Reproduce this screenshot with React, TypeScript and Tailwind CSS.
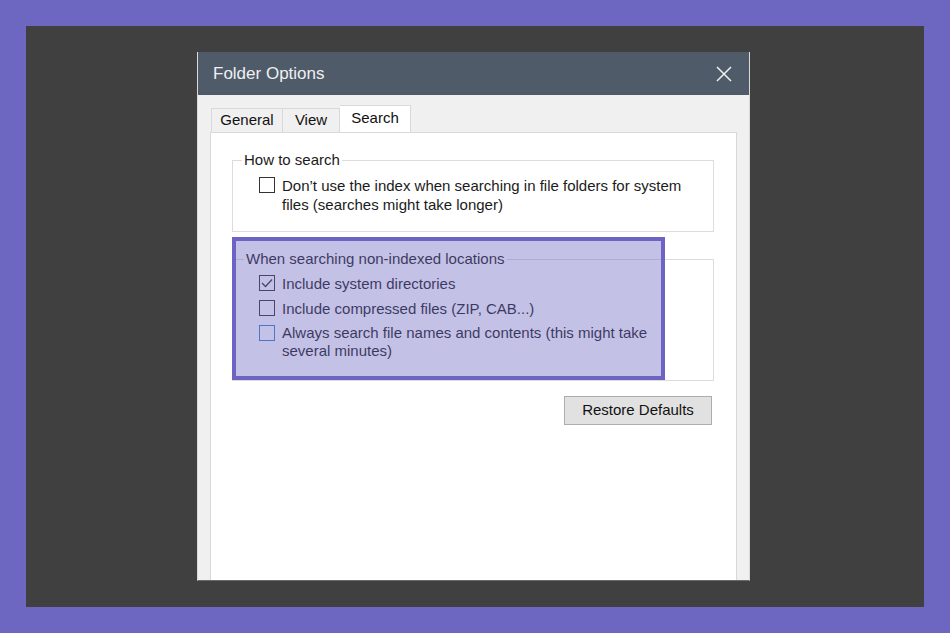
import React from 'react';

const font = { fontFamily: '"Liberation Sans", Arial, sans-serif' };

function Box({ checked, tone = 'dark' }: { checked?: boolean; tone?: 'dark' | 'blue' }) {
  return (
    <span
      className={`mt-[1px] flex h-[16px] w-[16px] shrink-0 items-center justify-center border bg-transparent ${
        tone === 'blue' ? 'border-[#3d7fd1]' : 'border-[#333333]'
      }`}
    >
      {checked && (
        <svg width="12" height="10" viewBox="0 0 12 10" fill="none">
          <path d="M1 5 L4.5 8.5 L11 1.5" stroke="#333" strokeWidth="1.3" />
        </svg>
      )}
    </span>
  );
}

function Check({ label, checked, tone }: { label: React.ReactNode; checked?: boolean; tone?: 'dark' | 'blue' }) {
  return (
    <div className="flex items-start gap-[7px] leading-[19px]">
      <Box checked={checked} tone={tone} />
      <span>{label}</span>
    </div>
  );
}

export default function App() {
  return (
    <div className="h-[633px] w-[950px] bg-[#6e67c2] p-[26px]" style={font}>
      <div className="h-[581px] w-[898px] bg-[#404040] pl-[171px] pt-[26px]">
        {/* Dialog */}
        <div className="flex h-[529px] w-[553px] flex-col border-x border-b border-x-[#dadada] border-b-[#6a6a6a] bg-[#f0f0f0]">
          <div className="flex h-[43px] shrink-0 items-center justify-between bg-[#4f5b69] pl-[15px] pr-[17px]">
            <span className="text-[17px] text-[#eef0f2]">Folder Options</span>
            <svg width="16" height="16" viewBox="0 0 16 16">
              <path d="M1 1 L15 15 M15 1 L1 15" stroke="#eef0f2" strokeWidth="1.5" />
            </svg>
          </div>

          <div className="flex flex-1 flex-col px-[12px] pt-[9px]">
            {/* Tabs */}
            <div className="flex items-end pl-[1px] text-[15px] text-[#111]">
              <div className="flex h-[24px] w-[72px] items-center justify-center border border-b-0 border-[#d9d9d9] bg-[#f0f0f0]">General</div>
              <div className="flex h-[24px] w-[57px] items-center justify-center border border-b-0 border-l-0 border-[#d9d9d9] bg-[#f0f0f0]">View</div>
              <div className="relative top-[1px] flex h-[28px] w-[71px] items-center justify-center border border-b-0 border-l-0 border-[#d9d9d9] bg-white pb-[3px]">Search</div>
            </div>

            {/* Panel */}
            <div className="relative flex-1 border border-b-0 border-[#d9d9d9] bg-white pl-[21px] pr-[22px] pt-[17px] text-[15px] text-[#1b1b1b]">
              <fieldset className="h-[82px] border border-[#dcdcdc] px-[26px]">
                <legend className="ml-[-17px] px-[2px] leading-[20px]">How to search</legend>
                <div className="pt-[6px]">
                  <Check label={<>Don’t use the index when searching in file folders for system<br />files (searches might take longer)</>} />
                </div>
              </fieldset>

              <fieldset className="mt-[17px] h-[132px] border border-[#dcdcdc] px-[26px]">
                <legend className="ml-[-15px] px-[2px] leading-[20px]">When searching non-indexed locations</legend>
                <div className="flex flex-col gap-[6px] pt-[5px]">
                  <Check checked label="Include system directories" />
                  <Check label="Include compressed files (ZIP, CAB...)" />
                  <Check tone="blue" label={<><span className="block leading-[18px]">Always search file names and contents (this might take</span><span className="block leading-[18px]">several minutes)</span></>} />
                </div>
              </fieldset>

              <div className="mt-[15px] flex justify-end pr-[2px]">
                <button className="h-[29px] w-[148px] border border-[#adadad] bg-[#e1e1e1] text-[15px] text-[#111]">Restore Defaults</button>
              </div>

              {/* highlight overlay */}
              <div className="absolute left-[21px] top-[104px] h-[143px] w-[433px] border-[4px] border-[#6c63c2] bg-[rgba(108,99,194,0.4)]" />
            </div>
          </div>
        </div>
      </div>
    </div>
  );
}
